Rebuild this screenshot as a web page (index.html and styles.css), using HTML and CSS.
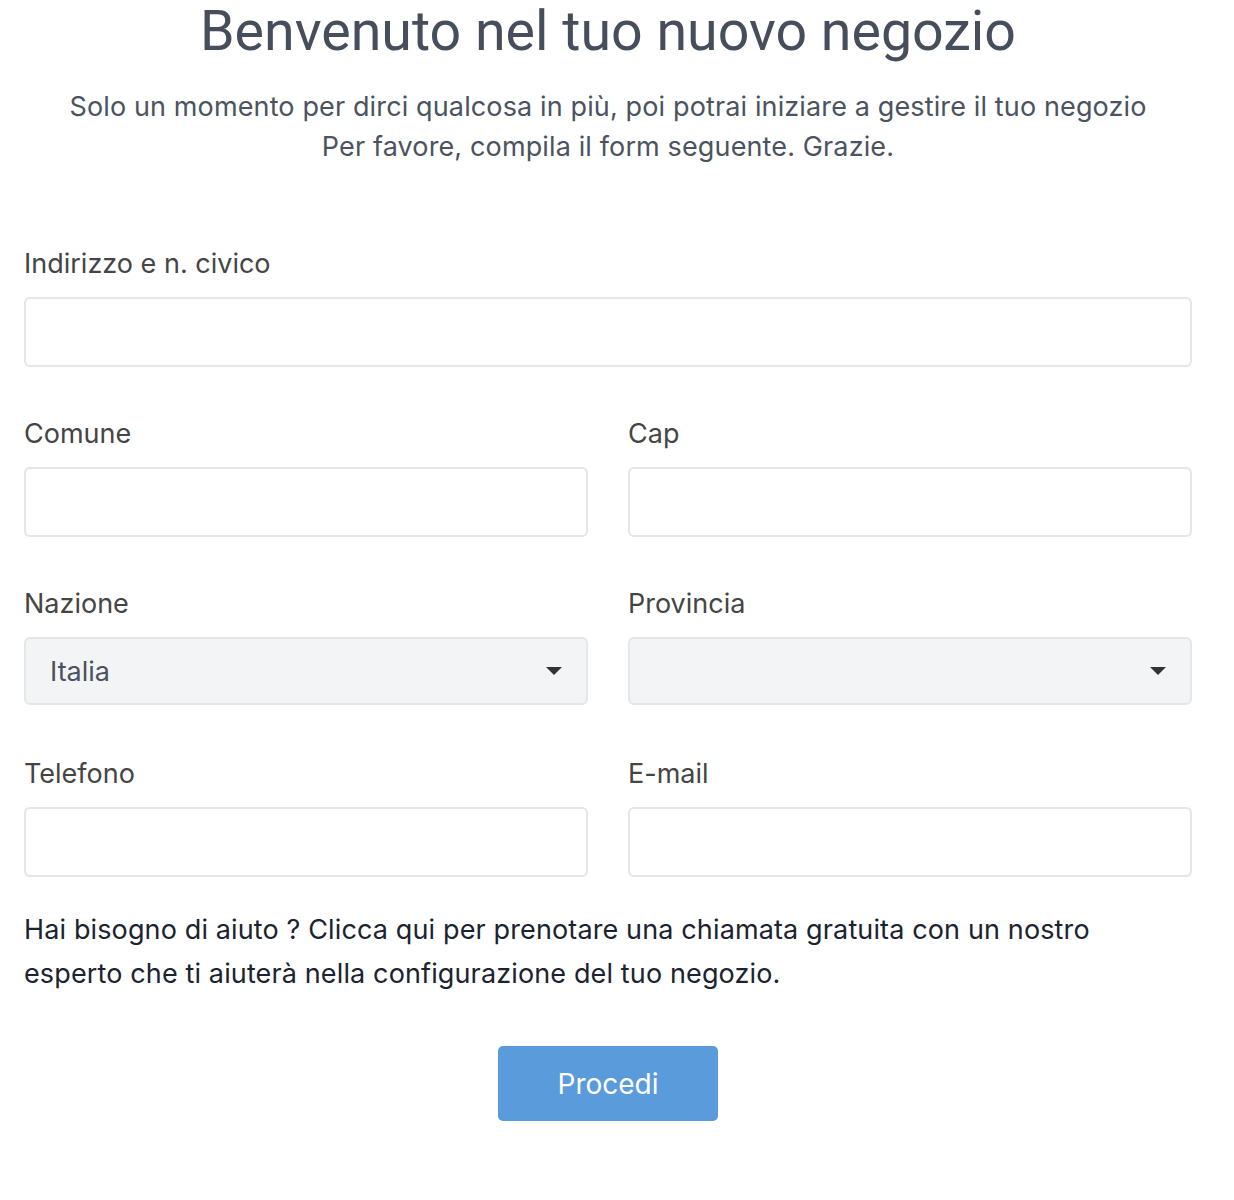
FILE: index.html
```html
<!DOCTYPE html>
<html lang="it">
<head>
<meta charset="utf-8">
<title>Benvenuto nel tuo nuovo negozio</title>
<link rel="stylesheet" href="styles.css">
</head>
<body>
<main class="page">
  <header class="intro">
    <h1 class="title">Benvenuto nel tuo nuovo negozio</h1>
    <p class="subtitle">Solo un momento per dirci qualcosa in più, poi potrai iniziare a gestire il tuo negozio<br>Per favore, compila il form seguente. Grazie.</p>
  </header>
  <form class="form">
    <div class="field field-full">
      <label class="label">Indirizzo e n. civico</label>
      <input class="input" type="text">
    </div>
    <div class="row">
      <div class="field">
        <label class="label">Comune</label>
        <input class="input" type="text">
      </div>
      <div class="field">
        <label class="label">Cap</label>
        <input class="input" type="text">
      </div>
    </div>
    <div class="row">
      <div class="field">
        <label class="label">Nazione</label>
        <div class="select"><span class="select-value">Italia</span><span class="caret"></span></div>
      </div>
      <div class="field">
        <label class="label">Provincia</label>
        <div class="select"><span class="select-value"></span><span class="caret"></span></div>
      </div>
    </div>
    <div class="row">
      <div class="field">
        <label class="label">Telefono</label>
        <input class="input" type="text">
      </div>
      <div class="field">
        <label class="label">E-mail</label>
        <input class="input" type="text">
      </div>
    </div>
    <p class="help">Hai bisogno di aiuto ? Clicca qui per prenotare una chiamata gratuita con un nostro esperto che ti aiuterà nella configurazione del tuo negozio.</p>
    <div class="actions">
      <button class="btn" type="button">Procedi</button>
    </div>
  </form>
</main>
</body>
</html>
```
FILE: styles.css
```css
* { box-sizing: border-box; }
html, body { margin: 0; padding: 0; background: #ffffff; }
body { font-family: Inter, "Noto Sans", sans-serif; }

.page {
  width: 1168px;
  margin-left: 24px;
}

.intro { text-align: center; }

.title {
  margin: 0;
  font-family: Roboto, "Liberation Sans", sans-serif;
  font-weight: 400;
  font-size: 55.5px;
  line-height: 64px;
  color: #464e5b;
}

.subtitle {
  margin: 23px 0 0;
  font-family: Inter, "Noto Sans", sans-serif;
  font-size: 27px;
  line-height: 40px;
  letter-spacing: 0.13px;
  color: #4b5360;
}

.form {
  margin-top: 81px;
  display: flex;
  flex-direction: column;
  gap: 51px;
}

.row {
  display: grid;
  grid-template-columns: 1fr 1fr;
  column-gap: 40px;
}

.field { display: flex; flex-direction: column; }

.label {
  font-family: Inter, "Noto Sans", sans-serif;
  font-size: 27px;
  line-height: 32px;
  color: #454545;
  margin-bottom: 17px;
}

.input {
  height: 70px;
  border: 2px solid #e3e5e9;
  border-radius: 6px;
  background: #fff;
  font-size: 27px;
  padding: 0 24px;
  outline: none;
}

.select {
  height: 68px;
  border: 2px solid #e5e6e8;
  border-radius: 6px;
  background: #f3f4f6;
  display: flex;
  align-items: center;
  justify-content: space-between;
  padding: 0 24px;
  margin-bottom: 2px;
}

.select-value {
  font-size: 27px;
  color: #4a5160;
}

.caret {
  width: 0;
  height: 0;
  border-left: 8px solid transparent;
  border-right: 8px solid transparent;
  border-top: 8px solid #333;
}

.help {
  margin: -20px 0 0;
  max-width: 1110px;
  font-family: Inter, "Noto Sans", sans-serif;
  font-size: 27px;
  line-height: 44px;
  letter-spacing: 0.13px;
  color: #1b2330;
}

.actions {
  display: flex;
  justify-content: center;
  margin-top: -1px;
}

.btn {
  width: 220px;
  height: 75px;
  border: none;
  border-radius: 5px;
  background: #5a9bdc;
  color: #ffffff;
  font-family: Inter, "Noto Sans", sans-serif;
  font-size: 28px;
}
```
